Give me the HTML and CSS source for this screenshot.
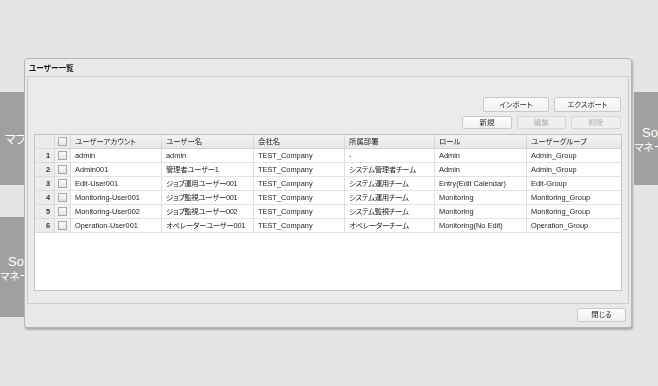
FILE: index.html
```html
<!DOCTYPE html>
<html lang="ja">
<head>
<meta charset="utf-8">
<title>ユーザー一覧</title>
<link rel="stylesheet" href="styles.css">
</head>
<body>
<div class="desk">
  <div class="tilerow row1">
    <div class="tile tile-left"><span class="t-big">マフ</span></div>
    <div class="tile tile-right">
      <div class="t-so">So</div>
      <div class="t-jp">マネー</div>
    </div>
  </div>
  <div class="tilerow row2">
    <div class="tile tile-left tile-left2">
      <div class="t-so">So</div>
      <div class="t-jp">マネー</div>
    </div>
  </div>
</div>

<div class="dialog">
  <div class="dlg-title">ユーザー一覧</div>
  <div class="dlg-body">
    <div class="toolbar">
      <div class="btnrow">
        <button class="btn w66">インポート</button>
        <button class="btn w67">エクスポート</button>
      </div>
      <div class="btnrow btnrow2">
        <button class="btn w50">新規</button>
        <button class="btn w49 disabled">編集</button>
        <button class="btn w50 disabled">削除</button>
      </div>
    </div>
    <div class="grid">
      <table>
        <colgroup>
          <col class="c-num"><col class="c-chk"><col class="c-acc"><col class="c-name"><col class="c-comp"><col class="c-dept"><col class="c-role"><col class="c-grp">
        </colgroup>
        <thead>
          <tr>
            <th class="num"></th>
            <th class="chk"><span class="cb"></span></th>
            <th>ユーザーアカウント</th>
            <th>ユーザー名</th>
            <th>会社名</th>
            <th>所属部署</th>
            <th>ロール</th>
            <th class="last">ユーザーグループ</th>
          </tr>
        </thead>
        <tbody>
          <tr><td class="num">1</td><td class="chk"><span class="cb"></span></td><td>admin</td><td>admin</td><td>TEST_Company</td><td>-</td><td>Admin</td><td class="last">Admin_Group</td></tr>
          <tr><td class="num">2</td><td class="chk"><span class="cb"></span></td><td>Admin001</td><td class="jp">管理者ユーザー1</td><td>TEST_Company</td><td class="jp">システム管理者チーム</td><td>Admin</td><td class="last">Admin_Group</td></tr>
          <tr><td class="num">3</td><td class="chk"><span class="cb"></span></td><td>Edit-User001</td><td class="jp">ジョブ運用ユーザー001</td><td>TEST_Company</td><td class="jp">システム運用チーム</td><td>Entry(Edit Calendar)</td><td class="last">Edit-Group</td></tr>
          <tr><td class="num">4</td><td class="chk"><span class="cb"></span></td><td>Monitoring-User001</td><td class="jp">ジョブ監視ユーザー001</td><td>TEST_Company</td><td class="jp">システム運用チーム</td><td>Monitoring</td><td class="last">Monitoring_Group</td></tr>
          <tr><td class="num">5</td><td class="chk"><span class="cb"></span></td><td>Monitoring-User002</td><td class="jp">ジョブ監視ユーザー002</td><td>TEST_Company</td><td class="jp">システム監視チーム</td><td>Monitoring</td><td class="last">Monitoring_Group</td></tr>
          <tr><td class="num">6</td><td class="chk"><span class="cb"></span></td><td>Operation-User001</td><td class="jp">オペレーターユーザー001</td><td>TEST_Company</td><td class="jp">オペレーターチーム</td><td>Monitoring(No Edit)</td><td class="last">Operation_Group</td></tr>
        </tbody>
      </table>
    </div>
  </div>
  <div class="dlg-footer">
    <button class="btn w49">閉じる</button>
  </div>
</div>
</body>
</html>
```

FILE: styles.css
```css
* { box-sizing: border-box; }
html, body {
  margin: 0;
  padding: 0;
}
body {
  width: 658px;
  height: 386px;
  overflow: hidden;
  position: relative;
  background: #e5e5e5;
  font-family: "Liberation Sans", "Noto Sans CJK JP", sans-serif;
  font-feature-settings: "palt";
  color: #1e1e1e;
}

/* background tiles */
.desk {
  padding-top: 92px;
  display: flex;
  flex-direction: column;
  gap: 32px;
}
.tilerow {
  display: flex;
  justify-content: space-between;
}
.row1 { height: 93px; }
.row2 { height: 100px; }
.tile {
  background: #a0a0a0;
  color: #fff;
  overflow: hidden;
  white-space: nowrap;
  display: flex;
  flex-direction: column;
  justify-content: center;
}
.tile-left { width: 28px; padding-left: 5px; }
.tile-right { width: 24px; padding-top: 2px; }
.tile-left2 { padding-left: 0; padding-top: 2px; }
.t-big { font-size: 12px; font-family: "Noto Sans CJK JP", sans-serif; }
.t-so { font-size: 13px; line-height: 15px; padding-left: 8px; }
.t-jp { font-size: 10.5px; line-height: 14px; font-family: "Noto Sans CJK JP", sans-serif; }

/* dialog */
.dialog {
  position: absolute;
  left: 24px;
  top: 58px;
  width: 608px;
  height: 270px;
  background: #e9e9e9;
  border: 1px solid #b5b5b5;
  border-radius: 3px;
  box-shadow: 1px 2px 2px rgba(0, 0, 0, 0.25);
  display: flex;
  flex-direction: column;
  will-change: transform;
}
.dlg-title {
  height: 17px;
  padding-left: 4px;
  font-size: 7.6px;
  font-weight: bold;
  line-height: 17px;
  color: #1a1a1a;
  font-family: "Noto Sans CJK JP", sans-serif;
}
.dlg-body {
  margin: 0 2px;
  height: 228px;
  border: 1px solid #cdcdcd;
  background: #ebebeb;
  padding: 20px 5px 0 6px;
}
.toolbar {
  display: flex;
  flex-direction: column;
  align-items: flex-end;
  padding-right: 2px;
  gap: 4px;
}
.btnrow {
  display: flex;
  gap: 5px;
}
.btn {
  height: 15px;
  padding: 0;
  border: 1px solid #c9c9c9;
  border-radius: 2px;
  background: linear-gradient(#fdfdfd, #f1f1f1);
  font-family: "Liberation Sans", "Noto Sans CJK JP", sans-serif;
  font-feature-settings: "palt";
  font-size: 7.4px;
  color: #2a2a2a;
  line-height: 13px;
}
.btnrow2 .btn { height: 13px; line-height: 11px; }
.btn.disabled {
  color: #b0b0b0;
  background: #efefef;
  border-color: #d6d6d6;
}
.w66 { width: 66px; }
.w67 { width: 67px; }
.w50 { width: 50px; }
.w49 { width: 49px; }

/* grid */
.grid {
  margin-top: 5px;
  width: 588px;
  height: 157px;
  border: 1px solid #c6c6c6;
  background: #fff;
}
table {
  table-layout: fixed;
  width: 586px;
  border-collapse: separate;
  border-spacing: 0;
  font-size: 7.4px;
}
.c-num { width: 20px; }
.c-chk { width: 16px; }
.c-acc { width: 91px; }
.c-name { width: 92px; }
.c-comp { width: 91px; }
.c-dept { width: 90px; }
.c-role { width: 92px; }
.c-grp { width: 94px; }
tr { height: 14px; }
th, td {
  height: 14px;
  padding: 0 0 0 4px;
  border-right: 1px solid #dedede;
  border-bottom: 1px solid #e2e2e2;
  text-align: left;
  font-weight: normal;
  white-space: nowrap;
  overflow: hidden;
  line-height: 13px;
  color: #1e1e1e;
}
td.jp { letter-spacing: -0.3px; }
th {
  background: linear-gradient(#f2f2f2, #e8e8e8);
  border-bottom: 1px solid #d2d2d2;
  border-right: 1px solid #d8d8d8;
}
th.last, td.last { border-right: none; }
td.num, th.num {
  background: #ececec;
  text-align: right;
  padding: 0 4px 0 0;
  border-right: 1px solid #d8d8d8;
  border-bottom: 1px solid #dcdcdc;
  font-weight: bold;
  color: #333;
}
td.chk, th.chk {
  background: #f3f3f3;
  padding: 0;
  text-align: center;
}
th.chk { background: linear-gradient(#f2f2f2, #e8e8e8); }
.cb {
  display: inline-block;
  width: 9px;
  height: 9px;
  vertical-align: middle;
  border: 1px solid #a9a9a9;
  background: linear-gradient(#fdfdfd, #e3e3e3);
  margin-top: -2px;
}

/* footer */
.dlg-footer {
  flex: 1;
  display: flex;
  justify-content: flex-end;
  align-items: flex-start;
  padding: 4px 5px 0 0;
}
.dlg-footer .btn { height: 14px; line-height: 12px; }
```
